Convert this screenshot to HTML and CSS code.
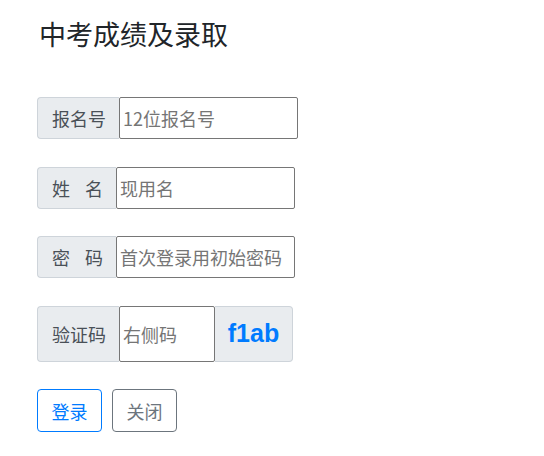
FILE: index.html
```html
<!DOCTYPE html>
<html lang="zh">
<head>
<meta charset="utf-8">
<title>中考成绩及录取</title>
<link rel="stylesheet" href="styles.css">
</head>
<body>
<div class="page">
  <h3 class="title">中考成绩及录取</h3>
  <form class="form">
    <div class="group">
      <span class="addon">报名号</span>
      <input class="field" type="text" placeholder="12位报名号">
    </div>
    <div class="group">
      <span class="addon addon-short">姓<i class="sp"></i>名</span>
      <input class="field" type="text" placeholder="现用名">
    </div>
    <div class="group">
      <span class="addon addon-short">密<i class="sp"></i>码</span>
      <input class="field" type="password" placeholder="首次登录用初始密码">
    </div>
    <div class="group group-tall">
      <span class="addon">验证码</span>
      <input class="field field-code" type="text" placeholder="右侧码">
      <span class="code">f1ab</span>
    </div>
    <div class="actions">
      <button class="btn btn-primary" type="button">登录</button>
      <button class="btn btn-secondary" type="button">关闭</button>
    </div>
  </form>
</div>
</body>
</html>
```

FILE: styles.css
```css
* { box-sizing: border-box; }
body {
  margin: 0;
  background: #fff;
  font-family: "Noto Sans CJK SC", "Noto Sans", sans-serif;
  color: #212529;
}
.page {
  padding: 17px 0 0 37px;
}
.title {
  margin: 0;
  font-size: 27px;
  font-weight: 400;
  line-height: 34px;
  padding-left: 2px;
}
.form {
  margin-top: 46px;
  display: flex;
  flex-direction: column;
  gap: 27.5px;
}
.group {
  display: flex;
  height: 42px;
}
.group-tall {
  height: 56px;
}
.addon {
  display: flex;
  align-items: center;
  padding: 0 13px 0 14px;
  background: #e9ecef;
  border: 1px solid #ced4da;
  border-right: 0;
  border-radius: 4px 0 0 4px;
  color: #495057;
  font-size: 18px;
  line-height: 1;
  white-space: nowrap;
}
.addon-short {
  padding: 0 13px 0 14px;
}
.sp {
  display: inline-block;
  width: 15px;
}
.field {
  width: 179px;
  height: 100%;
  margin: 0;
  padding: 1px 3px;
  border: 1px solid #767676;
  border-radius: 2px;
  font-family: "Noto Sans CJK SC", "Noto Sans", sans-serif;
  font-size: 18px;
  color: #212529;
  background: #fff;
  outline: none;
}
.field::placeholder {
  color: #757575;
}
.field-code {
  width: 96px;
}
.code {
  display: flex;
  align-items: center;
  justify-content: center;
  width: 78px;
  background: #e9ecef;
  border: 1px solid #ced4da;
  border-left: 0;
  border-radius: 0 4px 4px 0;
  color: #007bff;
  font-family: "Liberation Sans", Arial, sans-serif;
  font-weight: 700;
  font-size: 25px;
}
.actions {
  display: flex;
  gap: 10px;
}
.btn {
  height: 43px;
  width: 65px;
  padding: 0;
  background: #fff;
  border: 1px solid;
  border-radius: 4px;
  font-family: "Noto Sans CJK SC", "Noto Sans", sans-serif;
  font-size: 18px;
  cursor: pointer;
}
.btn-primary {
  color: #007bff;
  border-color: #007bff;
}
.btn-secondary {
  color: #6c757d;
  border-color: #6c757d;
}
```
